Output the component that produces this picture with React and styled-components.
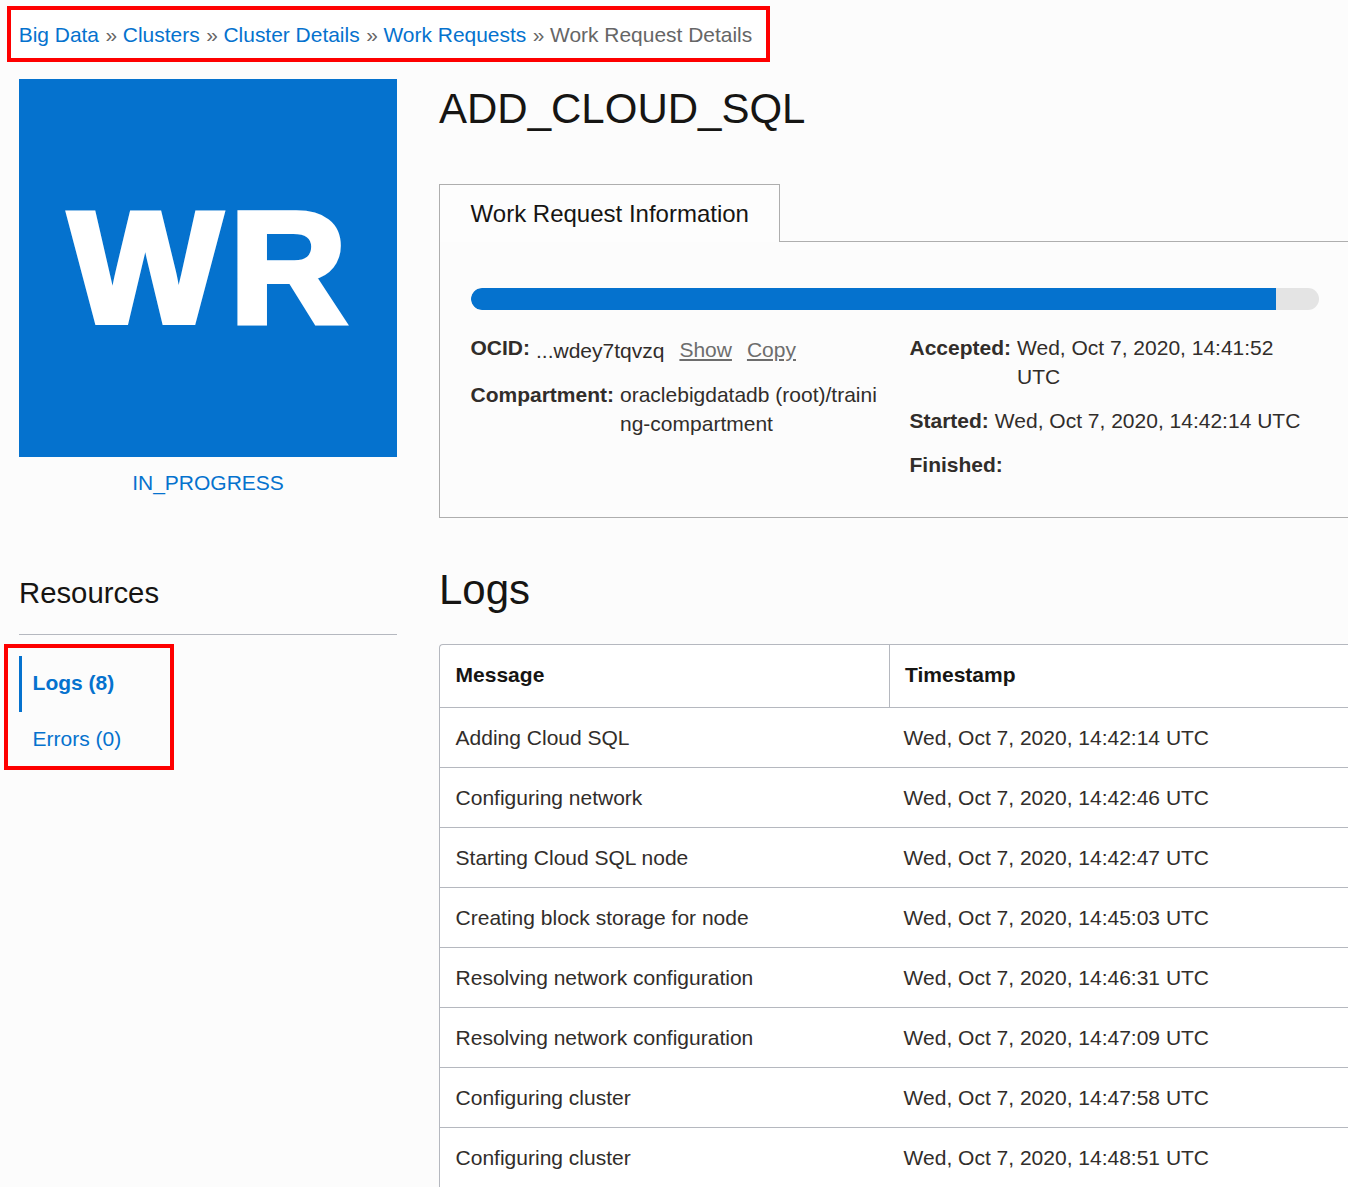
import React from "react";
import styled, { createGlobalStyle } from "styled-components";

const Global = createGlobalStyle`
  html, body { margin: 0; padding: 0; background: #fcfcfc; }
  body { font-family: "Liberation Sans", Arial, sans-serif; font-size: 21px; color: #312d2a; }
  #root { height: 1187px; overflow: hidden; }
`;

const Page = styled.div`
  width: 1348px;
  height: 1187px;
  overflow: hidden;
  background: #fcfcfc;
  display: flex;
  flex-direction: column;
  align-items: flex-start;
  padding-top: 6px;
  box-sizing: border-box;
`;
const CalloutCrumbs = styled.nav`
  box-sizing: border-box;
  margin-left: 7px;
  width: 763px;
  height: 56px;
  border: 4px solid #fe0000;
  background: #fff;
  padding: 2px 0 0 7.7px;
  display: flex;
  align-items: center;
  white-space: nowrap;
  font-size: 20.95px;
  line-height: 48px;
`;
const CrumbLink = styled.a`
  color: #0572ce;
`;
const CrumbSep = styled.span`
  color: #666;
  padding: 0 5.6px 0 6.6px;
`;
const CrumbCurrent = styled.span`
  color: #666;
`;
const Columns = styled.div`
  display: flex;
  margin-top: 17px;
  padding-left: 19px;
  gap: 42px;
  width: 1329px;
`;
const Sidebar = styled.aside`
  flex: 0 0 378px;
  width: 378px;
`;
const Logo = styled.div`
  box-sizing: border-box;
  width: 378px;
  height: 378px;
  padding: 0 0 2px 0;
  background: #0572ce;
  display: flex;
  align-items: center;
  justify-content: center;
`;
const LogoText = styled.span`
  display: block;
  color: #fff;
  font-weight: 700;
  font-size: 157px;
  -webkit-text-stroke: 6px #fff;
  letter-spacing: 8px;
  padding-left: 8px;
  line-height: 1;
  transform: scaleX(1.03);
`;
const Status = styled.div`
  text-align: center;
  color: #0572ce;
  margin-top: 12px;
  font-size: 21px;
  line-height: 28px;
`;
const ResourcesTitle = styled.h3`
  margin: 78px 0 0;
  font-weight: 400;
  font-size: 29.3px;
  line-height: 36px;
  color: #161513;
  padding-bottom: 23px;
  border-bottom: 1px solid #b5b8bf;
`;
const CalloutNav = styled.div`
  box-sizing: border-box;
  margin: 9px 0 0 -15px;
  width: 170px;
  height: 126px;
  border: 4px solid #fe0000;
  padding: 8px 0 0 11px;
`;
const NavItem = styled.a`
  box-sizing: border-box;
  display: flex;
  align-items: center;
  height: 56px;
  padding: 0 0 2px 10.6px;
  border-left: 3px solid ${p => (p.$active ? "#0572ce" : "transparent")};
  color: #0572ce;
  font-weight: ${p => (p.$active ? 700 : 400)};
  font-size: 21px;
`;
const Main = styled.main`
  flex: 0 0 909px;
  width: 909px;
`;
const Title = styled.h1`
  margin: 0;
  font-weight: 400;
  font-size: 42px;
  line-height: 60px;
  color: #161513;
`;
const TabRow = styled.div`
  display: flex;
  margin-top: 45px;
`;
const Tab = styled.div`
  box-sizing: border-box;
  width: 341px;
  height: 58px;
  border: 1px solid #aeaeae;
  border-bottom: none;
  padding: 13px 0 0 30.6px;
  font-size: 24px;
  line-height: 32px;
  color: #161513;
  background: #fdfdfd;
`;
const TabRule = styled.div`
  flex: 1;
  border-bottom: 1px solid #aeaeae;
`;
const Panel = styled.section`
  box-sizing: border-box;
  height: 276px;
  border-left: 1px solid #aeaeae;
  border-bottom: 1px solid #aeaeae;
  padding: 46px 29px 0 31px;
`;
const Track = styled.div`
  height: 22px;
  border-radius: 11px;
  background: #e4e4e4;
  overflow: hidden;
`;
const Fill = styled.div`
  height: 100%;
  background: #0572ce;
  border-radius: 11px 0 0 11px;
`;
const Details = styled.div`
  display: flex;
  margin: 23px 0 0 -0.5px;
`;
const DetailCol = styled.div`
  flex: 0 0 ${p => p.$w}px;
  width: ${p => p.$w}px;
  display: flex;
  flex-direction: column;
  gap: ${p => p.$gap}px;
`;
const Field = styled.div`
  display: flex;
  line-height: 29px;
  font-size: 21px;
  width: ${p => (p.$w ? `${p.$w}px` : "auto")};
`;
const Label = styled.b`
  font-weight: 700;
  color: #312d2a;
  margin-right: 6px;
  flex: none;
`;
const Value = styled.span`
  word-break: ${p => (p.$breakAll ? "break-all" : "normal")};
  flex: 1;
`;
const OcidValue = styled.span`
  position: relative;
  top: 3px;
  white-space: nowrap;
`;
const ActionLink = styled.a`
  color: #6d6d6d;
  text-decoration: underline;
  margin-left: 15px;
  position: relative;
  top: 2px;
`;
const LogsTitle = styled.h2`
  margin: 43px 0 0;
  font-weight: 400;
  font-size: 42px;
  line-height: 58px;
  color: #161513;
`;
const TableBox = styled.div`
  margin-top: 25px;
  border: 1px solid #b5b8bf;
  border-right: none;
  border-bottom: none;
  border-radius: 4px 0 0 0;
  background: #fff;
`;
const Row = styled.div`
  display: grid;
  grid-template-columns: 449px 1fr;
  height: ${p => (p.$head ? 63 : 60)}px;
  box-sizing: border-box;
  border-bottom: 1px solid #b5b8bf;
  align-items: center;
`;
const HeadCell = styled.div`
  height: 100%;
  display: flex;
  align-items: center;
  font-weight: 700;
  color: #161513;
  font-size: 21px;
  padding: 0 0 2px ${p => p.$pad}px;
  box-sizing: border-box;
  border-left: ${p => (p.$divider ? "1px solid #b5b8bf" : "none")};
`;
const Cell = styled.div`
  font-size: 21px;
  color: #312d2a;
  padding-left: ${p => p.$pad}px;
`;

const logs = [
  ["Adding Cloud SQL", "Wed, Oct 7, 2020, 14:42:14 UTC"],
  ["Configuring network", "Wed, Oct 7, 2020, 14:42:46 UTC"],
  ["Starting Cloud SQL node", "Wed, Oct 7, 2020, 14:42:47 UTC"],
  ["Creating block storage for node", "Wed, Oct 7, 2020, 14:45:03 UTC"],
  ["Resolving network configuration", "Wed, Oct 7, 2020, 14:46:31 UTC"],
  ["Resolving network configuration", "Wed, Oct 7, 2020, 14:47:09 UTC"],
  ["Configuring cluster", "Wed, Oct 7, 2020, 14:47:58 UTC"],
  ["Configuring cluster", "Wed, Oct 7, 2020, 14:48:51 UTC"],
];

export default function App() {
  return (
    <Page>
      <Global />
      <CalloutCrumbs>
        <CrumbLink>Big Data</CrumbLink><CrumbSep>»</CrumbSep>
        <CrumbLink>Clusters</CrumbLink><CrumbSep>»</CrumbSep>
        <CrumbLink>Cluster Details</CrumbLink><CrumbSep>»</CrumbSep>
        <CrumbLink>Work Requests</CrumbLink><CrumbSep>»</CrumbSep>
        <CrumbCurrent>Work Request Details</CrumbCurrent>
      </CalloutCrumbs>
      <Columns>
        <Sidebar>
          <Logo><LogoText>WR</LogoText></Logo>
          <Status>IN_PROGRESS</Status>
          <ResourcesTitle>Resources</ResourcesTitle>
          <CalloutNav>
            <NavItem $active>Logs (8)</NavItem>
            <NavItem>Errors (0)</NavItem>
          </CalloutNav>
        </Sidebar>
        <Main>
          <Title>ADD_CLOUD_SQL</Title>
          <TabRow>
            <Tab>Work Request Information</Tab>
            <TabRule />
          </TabRow>
          <Panel>
            <Track><Fill style={{ width: "94.9%" }} /></Track>
            <Details>
              <DetailCol $w={439} $gap={18}>
                <Field>
                  <Label>OCID:</Label>
                  <OcidValue>...wdey7tqvzq</OcidValue>
                  <ActionLink>Show</ActionLink>
                  <ActionLink>Copy</ActionLink>
                </Field>
                <Field $w={407}>
                  <Label>Compartment:</Label>
                  <Value $breakAll>oraclebigdatadb (root)/training-compartment</Value>
                </Field>
              </DetailCol>
              <DetailCol $w={409} $gap={15}>
                <Field>
                  <Label>Accepted:</Label>
                  <Value>Wed, Oct 7, 2020, 14:41:52 UTC</Value>
                </Field>
                <Field>
                  <Label>Started:</Label>
                  <Value>Wed, Oct 7, 2020, 14:42:14 UTC</Value>
                </Field>
                <Field>
                  <Label>Finished:</Label>
                </Field>
              </DetailCol>
            </Details>
          </Panel>
          <LogsTitle>Logs</LogsTitle>
          <TableBox>
            <Row $head>
              <HeadCell $pad={15.6}>Message</HeadCell>
              <HeadCell $pad={15} $divider>Timestamp</HeadCell>
            </Row>
            {logs.map(([m, t], i) => (
              <Row key={i}>
                <Cell $pad={15.6}>{m}</Cell>
                <Cell $pad={14.6}>{t}</Cell>
              </Row>
            ))}
          </TableBox>
        </Main>
      </Columns>
    </Page>
  );
}
